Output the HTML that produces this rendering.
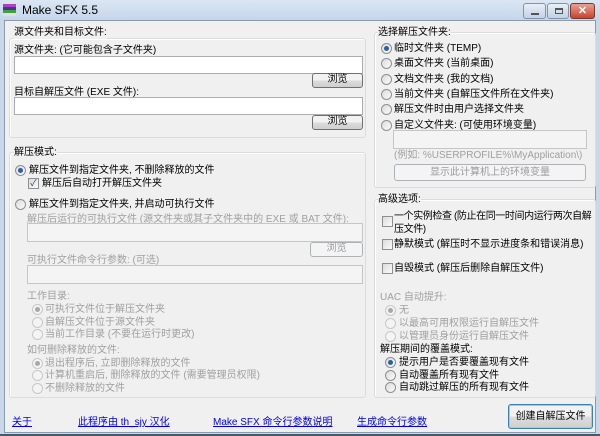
<!DOCTYPE html>
<html><head><meta charset="utf-8"><style>
*{margin:0;padding:0;box-sizing:border-box}
body{width:600px;height:436px;overflow:hidden;background:#c9d8e8;font-family:"Liberation Sans","Noto Sans CJK SC",sans-serif;font-size:10px;color:#000;position:relative}
.a{position:absolute;white-space:nowrap;line-height:13px}
#title{position:absolute;left:0;top:0;width:600px;height:20px;background:linear-gradient(#dbe6f3,#c5d6ea)}
#client{position:absolute;left:4px;top:20px;width:592px;height:413px;background:#f0f0f0;border:1px solid #8a9bb0}
#bot{position:absolute;left:0;top:434px;width:600px;height:2px;background:#4a5a6e}
.grp{position:absolute;border:1px solid #dcdcdc;border-radius:3px;box-shadow:inset 1px 1px 0 #fff}
.inp{position:absolute;background:#fff;border:1px solid #abadb3}
.inp.d{background:#f4f4f4;border-color:#c6c6c6}
.btn{position:absolute;border:1px solid #707070;border-radius:3px;background:linear-gradient(#f2f2f2 50%,#dddddd 50%,#cfcfcf);text-align:center;line-height:12px;font-size:10px}
.btn.d{border-color:#adb2b5;color:#9a9a9a;background:#f4f4f4}
.r{position:absolute;width:11px;height:11px;border-radius:50%;border:1px solid #8e8f8f;background:linear-gradient(135deg,#dcdcdc,#fbfbfb)}
.r.on::after{content:"";position:absolute;left:2px;top:2px;width:5px;height:5px;border-radius:50%;background:#2a5fa8}
.r.dis{border-color:#c8c8c8;background:#f4f4f4}
.r.dis.on::after{background:#a8a8a8}
.c{position:absolute;width:11px;height:11px;border:1px solid #8e8f8f;background:linear-gradient(135deg,#dcdcdc,#fbfbfb)}
.g{color:#a0a0a0}
.lk{color:#0000ee;text-decoration:underline}
</style></head><body>
<div id="title"></div>
<div class="a" style="left:3px;top:4px;width:13px;height:12px;background:linear-gradient(#b040c0 0 25%,#3a3a9a 25% 50%,#40a040 50% 75%,#e0e0e0 75%)"></div>
<div class="a" style="left:22px;top:3px;font-size:12px;line-height:14px">Make SFX 5.5</div>
<div class="a" style="left:523px;top:3px;width:23px;height:16px;border:1px solid #8393a8;border-radius:3px;background:linear-gradient(#e7eef7,#c3d2e4)"><div style="position:absolute;left:7px;top:9px;width:8px;height:2px;background:#555"></div></div>
<div class="a" style="left:547px;top:3px;width:22px;height:16px;border:1px solid #8393a8;border-radius:3px;background:linear-gradient(#e7eef7,#c3d2e4)"><div style="position:absolute;left:7px;top:4px;width:8px;height:6px;border:1px solid #555;border-top-width:2px"></div></div>
<div class="a" style="left:570px;top:3px;width:25px;height:16px;border:1px solid #7a3a30;border-radius:3px;background:linear-gradient(#e8a090,#c9442f);color:#fff;font-weight:bold;text-align:center;line-height:14px;font-size:11px">✕</div>
<div id="client"></div><div id="bot"></div>

<div class="grp" style="left:9px;top:38px;width:357px;height:100px"></div>
<div class="a" style="left:14px;top:26px;background:#f0f0f0">源文件夹和目标文件:</div>
<div class="a" style="left:14px;top:44px">源文件夹: (它可能包含子文件夹)</div>
<div class="inp" style="left:14px;top:56px;width:349px;height:18px"></div>
<div class="btn" style="left:312px;top:73px;width:51px;height:15px">浏览</div>
<div class="a" style="left:14px;top:86px">目标自解压文件 (EXE 文件):</div>
<div class="inp" style="left:14px;top:97px;width:349px;height:18px"></div>
<div class="btn" style="left:312px;top:115px;width:51px;height:15px">浏览</div>

<div class="grp" style="left:9px;top:152px;width:357px;height:246px"></div>
<div class="a" style="left:14px;top:146px;background:#f0f0f0">解压模式:</div>
<div class="r on" style="left:15px;top:165px"></div><div class="a" style="left:29px;top:164px">解压文件到指定文件夹, 不删除释放的文件</div>
<div class="c" style="left:28px;top:178px;font-size:9px;line-height:9px;color:#1f3e7a;text-align:center">✓</div><div class="a" style="left:42px;top:177px">解压后自动打开解压文件夹</div>
<div class="r" style="left:15px;top:199px"></div><div class="a" style="left:29px;top:198px">解压文件到指定文件夹, 并启动可执行文件</div>
<div class="a g" style="left:27px;top:213px">解压后运行的可执行文件 (源文件夹或其子文件夹中的 EXE 或 BAT 文件):</div>
<div class="inp d" style="left:27px;top:223px;width:336px;height:19px"></div>
<div class="btn d" style="left:310px;top:242px;width:53px;height:15px">浏览</div>
<div class="a g" style="left:27px;top:254px">可执行文件命令行参数: (可选)</div>
<div class="inp d" style="left:27px;top:265px;width:336px;height:19px"></div>
<div class="a g" style="left:27px;top:290px">工作目录:</div>
<div class="r dis on" style="left:32px;top:304px"></div><div class="a g" style="left:45px;top:303px">可执行文件位于解压文件夹</div>
<div class="r dis" style="left:32px;top:317px"></div><div class="a g" style="left:45px;top:316px">自解压文件位于源文件夹</div>
<div class="r dis" style="left:32px;top:329px"></div><div class="a g" style="left:45px;top:328px">当前工作目录 (不要在运行时更改)</div>
<div class="a g" style="left:27px;top:344px">如何删除释放的文件:</div>
<div class="r dis on" style="left:32px;top:358px"></div><div class="a g" style="left:45px;top:357px">退出程序后, 立即删除释放的文件</div>
<div class="r dis" style="left:32px;top:370px"></div><div class="a g" style="left:45px;top:369px">计算机重启后, 删除释放的文件 (需要管理员权限)</div>
<div class="r dis" style="left:32px;top:383px"></div><div class="a g" style="left:45px;top:382px">不删除释放的文件</div>

<div class="grp" style="left:374px;top:32px;width:222px;height:156px"></div>
<div class="a" style="left:378px;top:26px;background:#f0f0f0">选择解压文件夹:</div>
<div class="r on" style="left:381px;top:43px"></div><div class="a" style="left:394px;top:42px">临时文件夹 (TEMP)</div>
<div class="r" style="left:381px;top:58px"></div><div class="a" style="left:394px;top:57px">桌面文件夹 (当前桌面)</div>
<div class="r" style="left:381px;top:74px"></div><div class="a" style="left:394px;top:73px">文档文件夹 (我的文档)</div>
<div class="r" style="left:381px;top:89px"></div><div class="a" style="left:394px;top:88px">当前文件夹 (自解压文件所在文件夹)</div>
<div class="r" style="left:381px;top:104px"></div><div class="a" style="left:394px;top:103px">解压文件时由用户选择文件夹</div>
<div class="r" style="left:381px;top:120px"></div><div class="a" style="left:394px;top:119px">自定义文件夹: (可使用环境变量)</div>
<div class="inp d" style="left:393px;top:130px;width:194px;height:19px"></div>
<div class="a g" style="left:394px;top:149px">(例如: %USERPROFILE%\MyApplication\)</div>
<div class="btn d" style="left:394px;top:164px;width:192px;height:17px;line-height:15px">显示此计算机上的环境变量</div>

<div class="grp" style="left:374px;top:199px;width:222px;height:199px"></div>
<div class="a" style="left:378px;top:193px;background:#f0f0f0">高级选项:</div>
<div class="c" style="left:382px;top:216px"></div><div class="a" style="left:394px;top:210px;line-height:13px;letter-spacing:-0.4px">一个实例检查 (防止在同一时间内运行两次自解<br>压文件)</div>
<div class="c" style="left:382px;top:239px"></div><div class="a" style="left:394px;top:238px">静默模式 (解压时不显示进度条和错误消息)</div>
<div class="c" style="left:382px;top:263px"></div><div class="a" style="left:394px;top:262px">自毁模式 (解压后删除自解压文件)</div>
<div class="a g" style="left:380px;top:291px">UAC 自动提升:</div>
<div class="r dis on" style="left:385px;top:305px"></div><div class="a g" style="left:399px;top:304px">无</div>
<div class="r dis" style="left:385px;top:318px"></div><div class="a g" style="left:399px;top:317px">以最高可用权限运行自解压文件</div>
<div class="r dis" style="left:385px;top:331px"></div><div class="a g" style="left:399px;top:330px">以管理员身份运行自解压文件</div>
<div class="a" style="left:380px;top:343px">解压期间的覆盖模式:</div>
<div class="r on" style="left:385px;top:357px"></div><div class="a" style="left:399px;top:356px">提示用户是否要覆盖现有文件</div>
<div class="r" style="left:385px;top:370px"></div><div class="a" style="left:399px;top:369px">自动覆盖所有现有文件</div>
<div class="r" style="left:385px;top:382px"></div><div class="a" style="left:399px;top:381px">自动跳过解压的所有现有文件</div>

<div class="btn" style="left:508px;top:404px;width:85px;height:25px;line-height:23px;border-color:#3c7fb1;box-shadow:inset 0 0 0 1px #8fd0f3">创建自解压文件</div>

<div class="a lk" style="left:12px;top:416px">关于</div>
<div class="a lk" style="left:78px;top:416px">此程序由 th_sjy 汉化</div>
<div class="a lk" style="left:213px;top:416px">Make SFX 命令行参数说明</div>
<div class="a lk" style="left:357px;top:416px">生成命令行参数</div>
</body></html>
